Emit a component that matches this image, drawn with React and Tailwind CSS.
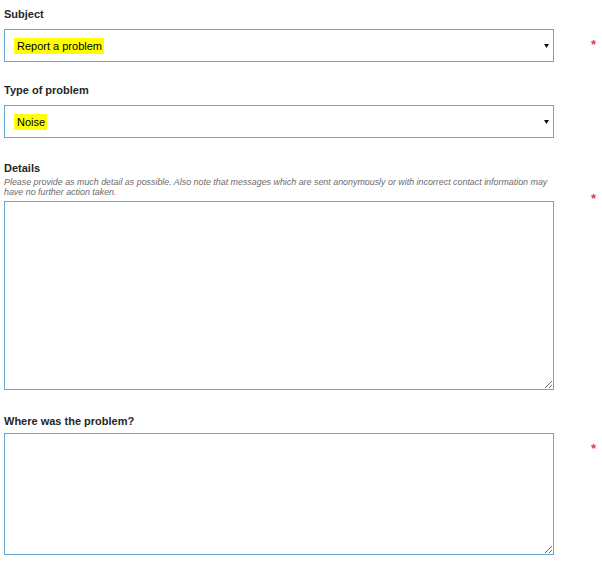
import React from 'react'

const font = { fontFamily: '"Liberation Sans", Arial, sans-serif' }

function Label({ children, className = '' }) {
  return <div className={`h-[13px] text-[11px] leading-[13px] font-bold text-[#262626] ${className}`}>{children}</div>
}

function Star({ className = '' }) {
  return <span className={`ml-[37px] h-[12px] text-[13px] font-bold leading-[12px] text-[#e23b4e] ${className}`}>*</span>
}

function Select({ value }) {
  return (
    <div className="flex h-[33px] w-[550px] items-center justify-between border border-[#68a7cb] bg-white pl-[9px] pr-[4px]">
      <span className="bg-[#ffff00] py-[2px] pl-[3px] pr-[2px] text-[11px] leading-[12px] text-black">{value}</span>
      <svg width="5" height="4" viewBox="0 0 5 4"><polygon points="0,0 5,0 2.5,4" fill="#111" /></svg>
    </div>
  )
}

export default function App() {
  return (
    <div className="min-h-[565px] w-[602px] bg-white pl-[4px] pt-[8px]" style={font}>
      <Label>Subject</Label>
      <div className="mt-[8px] flex">
        <Select value="Report a problem" />
        <Star className="mt-[10px]" />
      </div>

      <Label className="mt-[22px]">Type of problem</Label>
      <div className="mt-[8px] flex">
        <Select value="Noise" />
      </div>

      <Label className="mt-[24px]">Details</Label>
      <div className="flex">
        <div className="w-[550px]">
          <p className="mt-[2px] pr-[2px] text-[8.9px] italic leading-[10px] text-[#6b6b6b]">
            Please provide as much detail as possible. Also note that messages which are sent anonymously or with incorrect contact information may have no further action taken.
          </p>
          <textarea readOnly className="mt-[4px] block h-[189px] w-[550px] border border-[#68a7cb] bg-white outline-none" />
        </div>
        <Star className="mt-[18px]" />
      </div>

      <Label className="mt-[25px]">Where was the problem?</Label>
      <div className="mt-[5px] flex">
        <textarea readOnly className="block h-[122px] w-[550px] border border-[#68a7cb] bg-white outline-none" />
        <Star className="mt-[10px]" />
      </div>
    </div>
  )
}
